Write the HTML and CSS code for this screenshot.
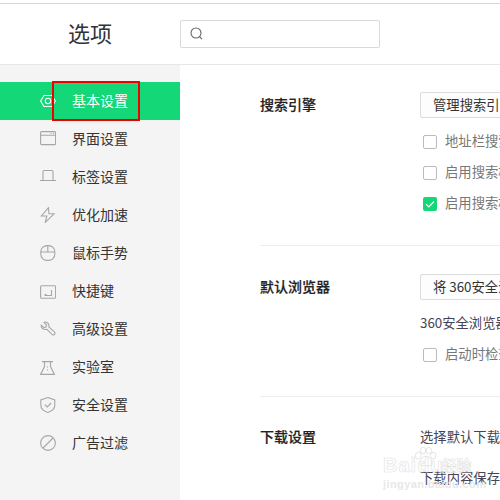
FILE: index.html
```html
<!DOCTYPE html>
<html>
<head>
    <title>选项</title>
    <meta charset="utf-8">
    <link rel="stylesheet" href="styles.css">
</head>
<body>
    <div class="page">
        <header class="top">
            <h1 class="title">选项</h1>
            <div class="search">
                <svg class="search-icon" viewBox="0 0 14 14"><circle cx="6" cy="6" r="5"/><path d="M9.600 9.600L12 12.200"/></svg>
            </div>
        </header>

        <div class="body">
            <nav class="side">
                <a class="item active">
                    <svg class="icon" viewBox="0 0 16 16"><path d="M.6 8L4 2.500h8L15.400 8 12 13.500H4z"/><circle cx="8" cy="8" r="2.700"/></svg>
                    基本设置
                </a>
                <a class="item">
                    <svg class="icon" viewBox="0 0 16 16"><rect x=".6" y=".6" width="15" height="13" rx="1"/><path d="M.6 4.200h15M10.500 2.400h1M13 2.400h1"/></svg>
                    界面设置
                </a>
                <a class="item">
                    <svg class="icon" viewBox="0 0 16 16"><path d="M3 11V2.500a1 1 0 0 1 1-1h8a1 1 0 0 1 1 1V11M0 11.500h16"/></svg>
                    标签设置
                </a>
                <a class="item">
                    <svg class="icon" viewBox="0 0 16 16"><path d="M8.500.6L1.400 9h5.400L5.300 15.400 14 6.800H8.900z"/></svg>
                    优化加速
                </a>
                <a class="item">
                    <svg class="icon" viewBox="0 0 16 16"><rect x=".8" y=".6" width="14" height="14.800" rx="6.200"/><path d="M7.800.6v6.400M.8 7h14"/></svg>
                    鼠标手势
                </a>
                <a class="item">
                    <svg class="icon" viewBox="0 0 16 16"><rect x=".6" y="2.800" width="15" height="12.400" rx="1"/><path d="M11.500 7v5.500H4.500M6.300 11l-1.800 1.500"/></svg>
                    快捷键
                </a>
                <a class="item">
                    <svg class="icon" viewBox="0 0 16 16"><path d="M1.200 4.200L4 6.600l2-.6.600-2L4 1.400C6 .4 8.600 1.600 9 4c.1.700 0 1.300-.2 1.800l5.800 5.400c1.200 1.300-.9 3.600-2.300 2.400L6.600 8.200C4 9 .8 7.400 1.200 4.200z"/></svg>
                    高级设置
                </a>
                <a class="item">
                    <svg class="icon" viewBox="0 0 16 16"><path d="M2 2.600h11M4.500 2.600v5L.6 15.400h13.800L10.500 7.600v-5M7.500 7.500v1M7.500 10.500v1"/></svg>
                    实验室
                </a>
                <a class="item">
                    <svg class="icon" viewBox="0 0 16 16"><path d="M7.800.6l7 2.400v5.200c0 3.600-3.400 6-7 7.200-3.600-1.200-7-3.600-7-7.200V3z"/><path d="M4.800 7.600l2.400 2.400 4-4"/></svg>
                    安全设置
                </a>
                <a class="item">
                    <svg class="icon" viewBox="0 0 16 16"><circle cx="8" cy="8" r="7.400"/><path d="M3 13L13 3"/></svg>
                    广告过滤
                </a>
            </nav>

            <main class="main">
                <section class="group">
                    <div class="label">搜索引擎</div>
                    <div class="controls">
                        <div class="btn">管理搜索引擎...</div>
                        <div class="rows">
                            <div class="row"><span class="check"></span>地址栏搜索时显示搜索建议</div>
                            <div class="row"><span class="check"></span>启用搜索框搜索建议功能</div>
                            <div class="row">
                                <span class="check on"><svg viewBox="0 0 14 14"><path d="M3 7.200l2.800 2.800L11 4.500"/></svg></span>启用搜索框快捷搜索功能
                            </div>
                        </div>
                    </div>
                </section>

                <section class="group">
                    <div class="label">默认浏览器</div>
                    <div class="controls">
                        <div class="btn">将 360安全浏览器设置为默认</div>
                        <div class="rows">
                            <div class="row dark">360安全浏览器目前不是默认浏览器</div>
                            <div class="row"><span class="check"></span>启动时检查是否为默认浏览器</div>
                        </div>
                    </div>
                </section>

                <section class="group last">
                    <div class="label">下载设置</div>
                    <div class="controls">
                        <div class="row dark line">选择默认下载工具及下载路径</div>
                        <div class="row dark save">下载内容保存位置及路径设置</div>
                    </div>
                </section>
            </main>
        </div>

        <div class="marker"></div>

        <div class="watermark">
            <div class="wm-logo">
                <span>Bai</span>
                <svg class="paw" viewBox="0 0 24 22"><ellipse cx="4.500" cy="9" rx="3" ry="3.800"/><ellipse cx="9.500" cy="3.800" rx="2.800" ry="3.400"/><ellipse cx="15.500" cy="3.800" rx="2.800" ry="3.400"/><ellipse cx="20" cy="9" rx="2.800" ry="3.600"/><path d="M12.500 9.500c-3 0-6.500 4.500-6.500 7.500 0 3.500 4 2.500 6.500 2.500s6.500 1 6.500-2.500c0-3-3.500-7.500-6.500-7.500z"/></svg>
                <span>du</span>
                <span class="wm-cn">经验</span>
            </div>
            <div class="wm-url">jingyan.baidu.com</div>
        </div>
    </div>
</body>
</html>
```

FILE: styles.css
```css
body {
    margin: 0;
    font-family: "Noto Sans CJK SC", "Liberation Sans", sans-serif;
    font-size: 14px;
    color: #333;
    background: #fff;
    overflow: hidden;
}
.page {
    position: relative;
    width: 500px;
    height: 500px;
    overflow: hidden;
}
.top {
    display: flex;
    align-items: center;
    height: 60px;
    margin-top: 3px;
    border-top: 1px solid #d6d6d6;
    border-bottom: 1px solid #e6e6e6;
}
.title {
    width: 180px;
    margin: 0 0 4px;
    padding-left: 68px;
    box-sizing: border-box;
    font-size: 22px;
    font-weight: 400;
    line-height: 56px;
    color: #333;
}
.search {
    display: flex;
    align-items: center;
    width: 200px;
    height: 28px;
    padding-left: 9px;
    box-sizing: border-box;
    border: 1px solid #d9d9d9;
    border-radius: 2px;
}
.search-icon {
    width: 14px;
    height: 14px;
    fill: none;
    stroke: #666;
    stroke-width: 1.100;
}
.body {
    display: flex;
    height: 435px;
}
.side {
    width: 180px;
    height: 435px;
    flex: none;
    padding-top: 17px;
    box-sizing: border-box;
    background: #f4f4f4;
}
.item {
    display: flex;
    align-items: center;
    gap: 16px;
    height: 38px;
    padding: 0 0 2px 40px;
    box-sizing: border-box;
    color: #333;
}
.item.active {
    background: #14d777;
    color: #fff;
}
.icon {
    width: 16px;
    height: 16px;
    flex: none;
    margin-top: 2px;
    fill: none;
    stroke: #a6a6a6;
    stroke-width: 1.100;
}
.active .icon {
    stroke: #fff;
}
.main {
    flex: 1;
    min-width: 0;
    padding-left: 80px;
    overflow: hidden;
}
.group {
    display: flex;
    padding: 27px 0 26px;
    border-bottom: 1px solid #eeeeee;
    white-space: nowrap;
}
.group + .group {
    padding-top: 28px;
}
.group.last {
    padding-top: 27px;
    border-bottom: 0;
}
.label {
    width: 160px;
    flex: none;
    height: 26px;
    line-height: 24px;
    font-weight: 500;
    color: #222;
    -webkit-text-stroke: 0.200px #222;
}
.btn {
    width: 170px;
    height: 26px;
    padding-left: 12px;
    box-sizing: border-box;
    border: 1px solid #dcdcdc;
    border-radius: 2px;
    background: #fdfdfd;
    font-size: 13.330px;
    line-height: 24px;
    color: #333;
}
.rows {
    margin-top: 8px;
}
.row {
    display: flex;
    align-items: center;
    height: 31px;
    padding: 0 0 2px 3px;
    box-sizing: border-box;
    font-size: 13.330px;
    color: #777;
}
.row.dark {
    padding-left: 0;
    color: #445;
}
.row.line {
    height: 26px;
}
.row.save {
    margin-top: 13px;
}
.check {
    display: block;
    width: 14px;
    height: 14px;
    flex: none;
    margin: 2px 8px 0 0;
    box-sizing: border-box;
    border: 1px solid #bbb;
    border-radius: 2px;
    background: #fff;
}
.check.on {
    border: 0;
    background: #14d777;
}
.check svg {
    display: block;
    width: 14px;
    height: 14px;
    fill: none;
    stroke: #fff;
    stroke-width: 1.200;
}
.marker {
    position: absolute;
    left: 52px;
    top: 81px;
    width: 88px;
    height: 40px;
    box-sizing: border-box;
    border: 2px solid #f00000;
}
.watermark {
    position: absolute;
    left: 383px;
    top: 447px;
    width: 90px;
    font-family: "Liberation Sans", sans-serif;
}
.wm-logo {
    display: flex;
    align-items: flex-end;
    height: 28px;
    font-size: 20px;
    font-weight: 700;
    line-height: 20px;
    letter-spacing: 1px;
    color: rgba(255, 255, 255, 0.3);
    -webkit-text-stroke: 0.600px #e2e2e2;
}
.wm-cn {
    margin-left: -2px;
    font-family: "Noto Sans CJK SC", sans-serif;
    font-size: 15px;
    letter-spacing: 0;
}
.paw {
    width: 25px;
    height: 21px;
    flex: none;
    align-self: flex-start;
    margin: 0 -21px 0 -4px;
    fill: rgba(255, 255, 255, 0.4);
    stroke: #e2e2e2;
    stroke-width: 1;
}
.wm-url {
    margin-top: 3px;
    font-size: 11px;
    font-weight: 700;
    line-height: 12px;
    letter-spacing: 0.400px;
    color: #e8e8e8;
}
```
